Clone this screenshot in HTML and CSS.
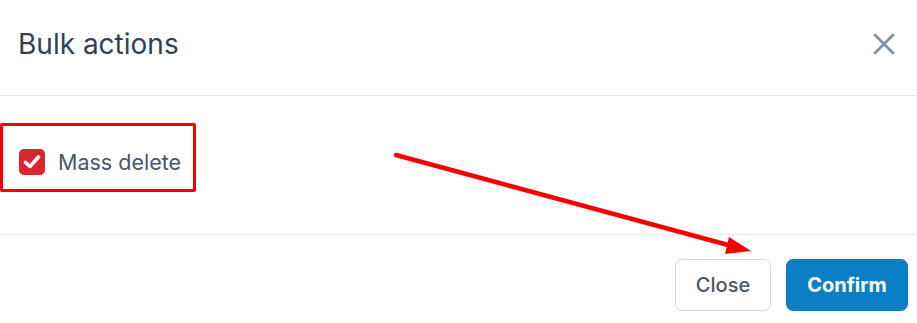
FILE: index.html
```html
<!DOCTYPE html>
<html lang="en">
<head>
<meta charset="utf-8">
<title>Bulk actions</title>
<link rel="stylesheet" href="styles.css">
</head>
<body>
<div class="modal">
  <header class="modal-header">
    <h2 class="modal-title">Bulk actions</h2>
    <button class="icon-close" aria-label="Close">
      <svg width="22" height="22" viewBox="0 0 22 22"><path d="M2 2 L20 20 M20 2 L2 20" stroke="#7d8fa9" stroke-width="2.6" stroke-linecap="round" fill="none"/></svg>
    </button>
  </header>
  <section class="modal-body">
    <label class="check-row">
      <span class="checkbox">
        <svg width="20" height="20" viewBox="0 0 20 20"><path d="M3.5 10.5 L8 14.5 L16.5 5" stroke="#fff" stroke-width="3.6" stroke-linecap="round" stroke-linejoin="round" fill="none"/></svg>
      </span>
      <span class="check-label">Mass delete</span>
    </label>
  </section>
  <footer class="modal-footer">
    <button class="btn btn-outline">Close</button>
    <button class="btn btn-primary">Confirm</button>
  </footer>
  <div class="annot-box"></div>
  <svg class="annot-arrow" width="917" height="323" viewBox="0 0 917 323">
    <line x1="396" y1="155" x2="730" y2="245.5" stroke="#f80000" stroke-width="4.5" stroke-linecap="round"/>
    <polygon points="751,251 729,237 725,254" fill="#f80000"/>
  </svg>
</div>
</body>
</html>
```
FILE: styles.css
```css
* { box-sizing: border-box; }
html, body { margin: 0; padding: 0; background: #fff; }
body { font-family: Inter, "Noto Sans", "Liberation Sans", sans-serif; width: 917px; height: 323px; overflow: hidden; }
.modal { position: relative; width: 917px; height: 323px; }
.modal-header {
  height: 96px;
  border-bottom: 1px solid #e6e8eb;
  display: flex;
  align-items: center;
  justify-content: space-between;
  padding: 0 22px 8px 18px;
}
.modal-title { margin: 0; font-size: 28px; font-weight: 400; color: #344054; letter-spacing: 0; }
.icon-close { border: 0; background: none; padding: 0; display: flex; cursor: pointer; }
.modal-body {
  height: 139px;
  border-bottom: 1px solid #e6e8eb;
  display: flex;
  align-items: center;
  padding: 0 19px 6px;
}
.check-row { display: flex; align-items: center; gap: 13px; }
.checkbox {
  width: 26px; height: 26px;
  border-radius: 5px;
  background: #d8272f;
  display: flex; align-items: center; justify-content: center;
}
.check-label { font-size: 21.5px; color: #4b5567; }
.modal-footer {
  display: flex;
  justify-content: flex-end;
  gap: 15px;
  padding: 24px 9px 0 0;
}
.btn {
  height: 52px;
  border-radius: 7px;
  font-family: inherit;
  font-size: 20px;
  cursor: pointer;
}
.btn-outline { width: 96px; background: #fff; border: 1px solid #cfd8e3; color: #4b5567; font-weight: 500; }
.btn-primary { width: 122px; background: #0a7fc4; border: 1px solid #0a7fc4; color: #fff; font-weight: 700; }
.annot-box {
  position: absolute;
  left: 0; top: 123px;
  width: 196px; height: 69px;
  border: 3px solid #f40000;
  border-radius: 2px;
}
.annot-arrow { position: absolute; left: 0; top: 0; pointer-events: none; }
```
